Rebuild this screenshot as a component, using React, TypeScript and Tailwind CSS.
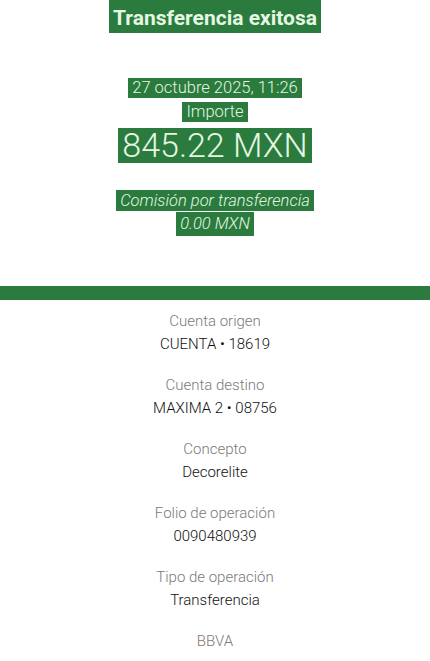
const details = [
  { label: 'Cuenta origen', value: 'CUENTA • 18619' },
  { label: 'Cuenta destino', value: 'MAXIMA 2 • 08756' },
  { label: 'Concepto', value: 'Decorelite' },
  { label: 'Folio de operación', value: '0090480939' },
  { label: 'Tipo de operación', value: 'Transferencia' },
];

export default function App() {
  return (
    <div className="w-[430px] h-[661px] overflow-hidden bg-white text-center" style={{ fontFamily: 'Roboto, "Open Sans", sans-serif' }}>
      {/* Header */}
      <div className="flex flex-col items-center">
        <span className="bg-[#2a7b3d] text-[#e4f7e2] font-bold text-[21px] leading-[29px] pt-[4px] px-1">
          Transferencia exitosa
        </span>

        <span className="mt-[45px] bg-[#2a7b3d] text-[#e4f7e2] font-light text-[16.5px] leading-[20px] px-1">
          27 octubre 2025, 11:26
        </span>
        <span className="mt-[4px] bg-[#2a7b3d] text-[#e4f7e2] font-light text-[16.5px] leading-[20px] px-1">
          Importe
        </span>
        <span className="mt-[6px] bg-[#2a7b3d] text-[#e4f7e2] font-light text-[34px] leading-[35px] px-1">
          845.22 MXN
        </span>

        <span className="mt-[27px] bg-[#2a7b3d] text-[#e4f7e2] font-light italic text-[16.5px] leading-[21px] px-1">
          Comisión por transferencia
        </span>
        <span className="mt-[1px] bg-[#2a7b3d] text-[#e4f7e2] font-light italic text-[16.5px] leading-[24px] px-1">
          0.00 MXN
        </span>
      </div>

      {/* Divider */}
      <div className="mt-[50px] h-[14px] bg-[#2a7b3d]" />

      {/* Details */}
      <div className="pt-[11px] flex flex-col gap-[20px]">
        {details.map((d) => (
          <div key={d.label} className="flex flex-col items-center">
            <span className="text-[15px] leading-[20px] font-light text-[#7a7a7a]">{d.label}</span>
            <span className="mt-[3px] text-[15px] leading-[21px] font-light text-[#111111]">{d.value}</span>
          </div>
        ))}
        <span className="text-[15px] leading-[20px] font-light text-[#7a7a7a]">BBVA</span>
      </div>
    </div>
  );
}
